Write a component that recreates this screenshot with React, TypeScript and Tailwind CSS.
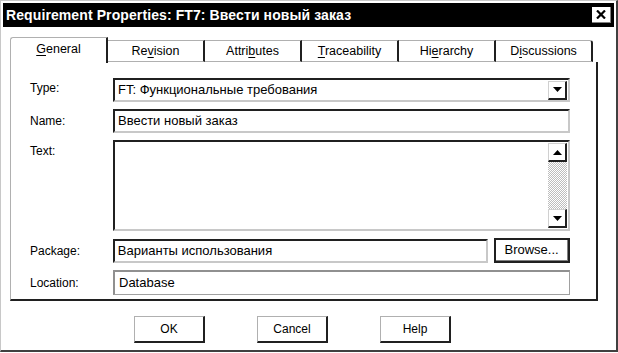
import React from 'react';

const font = { fontFamily: '"Liberation Sans", Arial, sans-serif' };

function U({ children }: { children: React.ReactNode }) {
  return <span className="underline underline-offset-2">{children}</span>;
}

function Tab({ children, active, last }: { children: React.ReactNode; active?: boolean; last?: boolean }) {
  if (active) {
    return (
      <div className="w-[98px] h-[26px] flex items-center justify-center border-t border-l border-[#b0b0b0] border-r-2 border-r-[#202020] rounded-tl-[3px] bg-white -mb-px relative z-10 pb-[2px]">
        {children}
      </div>
    );
  }
  return (
    <div
      className={
        'w-[97px] h-[22px] flex items-center justify-center border-t border-[#b0b0b0] border-b border-b-[#b0b0b0] border-r-2 border-r-[#202020] ' +
        (last ? 'rounded-tr-[3px]' : '')
      }
    >
      {children}
    </div>
  );
}

function Field({ children, className }: { children?: React.ReactNode; className?: string }) {
  return (
    <div
      className={
        'h-[24px] flex items-center pl-[3px] bg-white border-t-2 border-l-2 border-[#202020] border-r-2 border-b-2 border-r-[#c8c8c8] border-b-[#c8c8c8] text-[13px] text-black ' +
        (className || '')
      }
    >
      {children}
    </div>
  );
}

function ArrowBox({ up }: { up?: boolean }) {
  return (
    <div className="w-[19px] h-[19px] flex items-center justify-center bg-white border-t border-l border-[#d0d0d0] border-r-2 border-b-2 border-r-[#202020] border-b-[#202020]">
      <svg width="9" height="5" viewBox="0 0 9 5">
        {up ? <path d="M4.5 0 L9 5 L0 5 Z" fill="#000" /> : <path d="M0 0 L9 0 L4.5 5 Z" fill="#000" />}
      </svg>
    </div>
  );
}

function Button({ children }: { children: React.ReactNode }) {
  return (
    <div className="w-[71px] h-[27px] flex items-center justify-center bg-white text-[12px] text-black border-t border-l border-[#b0b0b0] border-r-2 border-b-2 border-r-[#202020] border-b-[#202020]">
      {children}
    </div>
  );
}

export default function App() {
  return (
    <div style={font} className="w-[618px] h-[353px] bg-white overflow-hidden">
      <div className="w-[618px] h-[352px] border-t border-l border-[#c8c8c8] border-r-2 border-b-2 border-r-[#404040] border-b-[#404040] pt-[2px] px-[2px] flex flex-col">
        {/* Title bar */}
        <div className="h-[24px] bg-black flex items-center justify-between pl-[3px] pr-[3px]">
          <span className="text-white font-bold text-[14px] tracking-[0.1px]">Requirement Properties: FT7: Ввести новый заказ</span>
          <div className="w-[19px] h-[16px] bg-white flex items-center justify-center border-r border-b border-[#808080]">
            <svg width="10" height="9" viewBox="0 0 10 9">
              <path d="M1 0.5 L9 8.5 M9 0.5 L1 8.5" stroke="#000" strokeWidth="2.2" />
            </svg>
          </div>
        </div>

        {/* Tabs */}
        <div className="ml-[7px] mt-[10px] flex items-end text-[12.5px] text-black">
          <Tab active>
            <span><U>G</U>eneral</span>
          </Tab>
          <Tab>
            <span>Re<U>v</U>ision</span>
          </Tab>
          <Tab>
            <span>Attri<U>b</U>utes</span>
          </Tab>
          <Tab>
            <span><U>T</U>raceability</span>
          </Tab>
          <Tab>
            <span>Hi<U>e</U>rarchy</span>
          </Tab>
          <Tab last>
            <span>D<U>i</U>scussions</span>
          </Tab>
        </div>

        {/* Panel */}
        <div className="ml-[7px] w-[588px] h-[239px] border-l border-[#b0b0b0] border-r-2 border-b-2 border-r-[#202020] border-b-[#202020] pl-[19px] pr-[26px] pt-[16px] flex flex-col gap-[7px] text-[12px] text-black">
          <div className="flex items-center">
            <span className="w-[83px] -mt-[4px]">Type:</span>
            <Field className="flex-1 justify-between pr-[1px]">
              <span>FT: Функциональные требования</span>
              <ArrowBox />
            </Field>
          </div>
          <div className="flex items-center">
            <span className="w-[83px]">Name:</span>
            <Field className="flex-1">Ввести новый заказ</Field>
          </div>
          <div className="flex items-start">
            <span className="w-[83px] pt-[2px]">Text:</span>
            <div className="flex-1 h-[91px] bg-white border-t-2 border-l-2 border-[#202020] border-r-2 border-b-2 border-r-[#c8c8c8] border-b-[#c8c8c8] flex justify-end pr-[1px] py-[1px]">
              <div className="w-[19px] flex flex-col">
                <ArrowBox up />
                <div className="flex-1 bg-[repeating-conic-gradient(#bdbdbd_0_25%,#ffffff_0_50%)] bg-[length:2px_2px]" />
                <ArrowBox />
              </div>
            </div>
          </div>
          <div className="flex items-center">
            <span className="w-[83px]">Package:</span>
            <Field className="w-[376px]">Варианты использования</Field>
            <div className="ml-[6px] w-[76px] h-[25px] flex items-center justify-center bg-white border-2 border-[#202020] text-[13px]">
              <div className="w-full h-full flex items-center justify-center border-r border-b border-[#808080]">Browse...</div>
            </div>
          </div>
          <div className="flex items-center">
            <span className="w-[83px]">Location:</span>
            <div className="flex-1 h-[25px] flex items-center pl-[4px] text-[13px] border border-[#a0a0a0] border-t-2 border-l-2 border-t-[#909090] border-l-[#909090]">Database</div>
          </div>
        </div>

        {/* Buttons */}
        <div className="mt-[15px] ml-[131px] flex gap-[52px]">
          <Button>OK</Button>
          <Button>Cancel</Button>
          <Button>Help</Button>
        </div>
      </div>
    </div>
  );
}
